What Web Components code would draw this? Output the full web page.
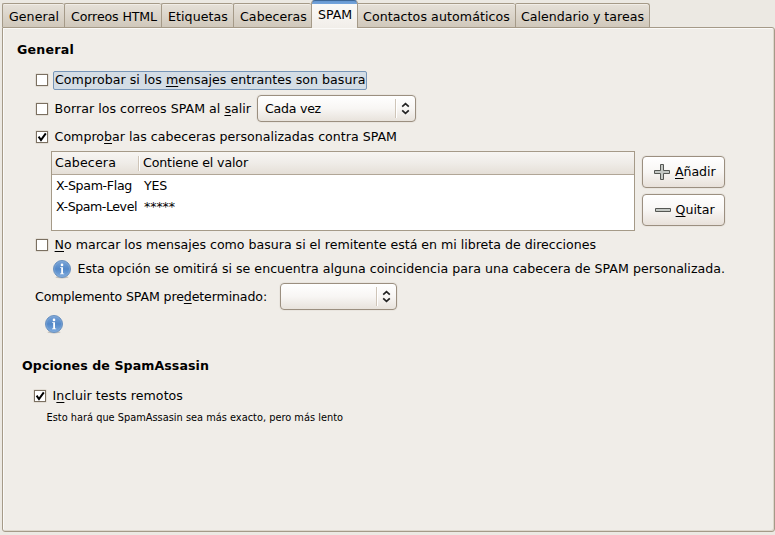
<!DOCTYPE html>
<html lang="es">
<head>
<meta charset="utf-8">
<title>Preferencias de correo</title>
<style>
html,body{margin:0;height:100%;overflow:hidden;background:#ece9e3}
body{font:12.6px/16px "DejaVu Sans",sans-serif;color:#000}
</style>
</head>
<body>
<mail-preferences></mail-preferences>
<script>
const define = (name, html, setup) => {
  const t = document.createElement('template');
  t.innerHTML = html;
  customElements.define(name, class extends HTMLElement {
    constructor() {
      super();
      this.attachShadow({mode: 'open'}).append(t.content.cloneNode(true));
    }
    connectedCallback() { if (setup) setup.call(this, this.shadowRoot); }
  });
};

/* Text run; "w" spreads the letters over a fixed width. */
define('ui-text', `<style>
:host{display:inline-block;white-space:nowrap;flex:none}
:host([bold]){font-weight:bold}
:host([small]){font-size:9.8px}
</style><span><slot></slot></span>`, function (root) {
  const w = +this.getAttribute('w');
  if (!w) return;
  const span = root.querySelector('span');
  const n = this.textContent.length;
  span.style.letterSpacing = ((w - span.getBoundingClientRect().width) / n).toFixed(4) + 'px';
  this.style.width = w + 'px';
});

define('ui-tab', `<style>
:host{display:flex;box-sizing:border-box;width:var(--tab-w);height:24px;padding:5px 0 0 6px;
border:solid #a59a88;border-width:1px 0 0 1px;border-radius:2px 2px 0 0;
background:linear-gradient(#e6e1d9,#d0c8bb);box-shadow:inset 0 1px #f1ede7}
:host([last]){border-right-width:1px;border-radius:2px 3px 0 0;padding-left:5px}
:host([active]){height:28px;padding-top:6px;border:1px solid #a59a88;border-bottom:0;border-top-color:#3d6797;
border-radius:4px 4px 0 0;margin-bottom:-1px;z-index:1;
background:linear-gradient(#6698d2 0,#76a5dc 3px,#fbfaf8 3px,#f1eee9 100%);box-shadow:none}
:host([after]){border-left:0;padding-left:5px;border-top-left-radius:0}
</style><slot></slot>`);

define('ui-check', `<style>
:host{display:block;flex:none;width:12px;height:12px}
svg{display:block;overflow:visible}
path{display:none}
:host([checked]) path{display:block}
</style><svg width="12" height="12"><rect x="-.5" y="-.5" width="13" height="13" rx="1" fill="none" stroke="#e2ddd5"/><rect x=".5" y=".5" width="11" height="11" fill="#fff" stroke="#7b7061"/><path d="M2.6 5.6 L5 9 L9.8 2.4" fill="none" stroke="#000" stroke-width="2"/></svg>`);

define('ui-combo', `<style>
:host{display:flex;flex:none;align-items:center;box-sizing:border-box;height:27px;padding-left:7px;
border:1px solid #9b8f80;border-radius:4px;background:linear-gradient(#fff,#f8f6f4 50%,#e8e3dc);
box-shadow:0 0 0 1px #e9e5df}
i{margin-left:auto;width:1px;height:19px;background:#cfc5b8;box-shadow:1px 0 #fff}
svg{display:block;margin:0 5px 0 5px}
</style><slot></slot><i></i><svg width="9" height="13" fill="none" stroke="#222" stroke-width="1.7"><path d="M1.2 4.6 4.5 1.6 7.8 4.6M1.2 8.4 4.5 11.4 7.8 8.4"/></svg>`);

define('ui-button', `<style>
:host{display:flex;align-items:center;box-sizing:border-box;width:83px;height:32px;padding-left:11px;
border:1px solid #9b8f80;border-radius:4px;background:linear-gradient(#fff,#f8f6f4 50%,#e8e1da);
box-shadow:0 0 0 1px #e9e5df}
svg{display:block;flex:none;margin-right:4px}
.plus,.minus{display:none}
:host([icon=plus]) .plus,:host([icon=minus]) .minus{display:block}
</style><svg width="17" height="16" fill="#c4c8c4" stroke="#555753"><path class="plus" d="M6.5.5H9.5V6.5H15.5V9.5H9.5V15.5H6.5V9.5H.5V6.5H6.5Z"/><path class="minus" d="M1.5 6.5H16.5V9.5H1.5Z"/></svg><slot></slot>`);

define('ui-info', `<style>:host{display:block;flex:none;width:18px;height:18px}svg{display:block;overflow:visible}</style>
<svg width="18" height="18"><defs><linearGradient id="g" x2="0" y2="1"><stop stop-color="#7ba5d8"/><stop offset=".5" stop-color="#5388c8"/><stop offset="1" stop-color="#7facdf"/></linearGradient></defs><ellipse cx="9" cy="17.2" rx="6.5" ry="1.3" fill="#c4c1bb"/><circle cx="9" cy="9" r="8.5" fill="url(#g)" stroke="#6b92c0" stroke-width="1"/><circle cx="9" cy="9" r="7.5" fill="none" stroke="#86acd9" stroke-width=".5"/><circle cx="9" cy="4.9" r="1.3" fill="#fff"/><path d="M7.2 7.3H10V13.4H11.2V14.2H7V13.4H8.2V8.1H7.2Z" fill="#fff"/></svg>`);

define('ui-row', `<style>:host{display:flex;align-items:center}</style><slot></slot>`);

define('header-table', `<style>
:host{display:block;flex:none;box-sizing:border-box;width:584px;height:80px;border:1px solid #a59a88;background:#fff}
.r{display:grid;grid-template-columns:83px 1fr;align-items:center;height:21px;padding-left:4px}
.h{height:22px;padding-left:3px;border-bottom:1px solid #b1a697;background:linear-gradient(#f7f5f2,#efece8 50%,#e5dfd7)}
.h span{display:flex;align-items:center}
.h i{width:1px;height:15px;background:#cfc5b8;box-shadow:1px 0 #fff;margin-right:4px}
.b{margin-left:5px}
</style>
<div class="r h"><ui-text w="61">Cabecera</ui-text><span><i></i><ui-text w="105">Contiene el valor</ui-text></span></div>
<div class="r"><ui-text w="76">X-Spam-Flag</ui-text><ui-text class="b" w="23">YES</ui-text></div>
<div class="r"><ui-text w="81">X-Spam-Level</ui-text><ui-text class="b" w="31">*****</ui-text></div>`);

define('mail-preferences', `<style>
:host{display:flex;flex-direction:column;box-sizing:border-box;height:532px;padding:0 0 0 2px}
nav{display:flex;align-items:flex-end;height:27px}
main{flex:1;box-sizing:border-box;width:773px;padding:10px 0 0;border:1px solid #a59a88;border-radius:0 3px 3px 3px;
background:#f0ede8;box-shadow:inset 1px 1px #fbfaf8,inset -1px -1px #ddd7cc}
u{text-decoration-thickness:1px;text-underline-offset:2px;text-decoration-skip-ink:none}
ui-row{height:28px}
ui-check{margin-right:6px}
ui-check + ui-text{margin-left:.6px}
.focus{display:flex;align-items:center;box-sizing:border-box;width:314px;height:19px;padding-left:1px;margin-left:-1px;
border:1px solid #7796b8;border-radius:2px;background:#d4dde5}
.buttons{display:flex;flex-direction:column;gap:6px;margin-left:7px}
.i{padding-left:33px}
</style>
<nav>
<ui-tab style="--tab-w:62px"><ui-text w="50">General</ui-text></ui-tab>
<ui-tab style="--tab-w:97px"><ui-text w="86">Correos HTML</ui-text></ui-tab>
<ui-tab style="--tab-w:72px"><ui-text w="60">Etiquetas</ui-text></ui-tab>
<ui-tab style="--tab-w:78px"><ui-text w="67">Cabeceras</ui-text></ui-tab>
<ui-tab active style="--tab-w:47px"><ui-text w="34">SPAM</ui-text></ui-tab>
<ui-tab after style="--tab-w:157px"><ui-text w="147">Contactos automáticos</ui-text></ui-tab>
<ui-tab last style="--tab-w:135px"><ui-text w="123">Calendario y tareas</ui-text></ui-tab>
</nav>
<main>
<ui-row style="height:23px;padding-left:14px"><ui-text bold w="57">General</ui-text></ui-row>
<ui-row class="i" style="margin-top:5px"><ui-check></ui-check><span class="focus"><ui-text w="310.5">Comprobar si los <u>m</u>ensajes entrantes son basura</ui-text></span></ui-row>
<ui-row class="i" style="margin-top:1px;height:27px"><ui-check></ui-check><ui-text w="196.4">Borrar los correos SPAM al <u>s</u>alir</ui-text><ui-combo style="width:159px;margin-left:6px"><ui-text w="56">Cada vez</ui-text></ui-combo></ui-row>
<ui-row class="i" style="margin-top:1px"><ui-check checked></ui-check><ui-text w="342.4">Compro<u>b</u>ar las cabeceras personalizadas contra SPAM</ui-text></ui-row>
<ui-row style="height:80px;padding-left:48px"><header-table></header-table><div class="buttons"><ui-button icon="plus"><ui-text w="40.5"><u>A</u>ñadir</ui-text></ui-button><ui-button icon="minus"><ui-text w="39" style="margin-left:.6px"><u>Q</u>uitar</ui-text></ui-button></div></ui-row>
<ui-row class="i"><ui-check></ui-check><ui-text w="541.4"><u>N</u>o marcar los mensajes como basura si el remitente está en mi libreta de direcciones</ui-text></ui-row>
<ui-row style="height:20px;padding-left:50px"><ui-info></ui-info><ui-text w="647.5" style="margin-left:6.5px">Esta opción se omitirá si se encuentra alguna coincidencia para una cabecera de SPAM personalizada.</ui-text></ui-row>
<ui-row style="height:27px;margin-top:4px;padding-left:32px"><ui-text w="232">Complemento SPAM pre<u>d</u>eterminado:</ui-text><ui-combo style="width:117px;margin-left:13px"></ui-combo></ui-row>
<ui-row style="height:22px;margin-top:3px;padding-left:42px"><ui-info></ui-info></ui-row>
<ui-row style="height:22px;margin-top:20px;padding-left:19px"><ui-text bold w="187">Opciones de SpamAssasin</ui-text></ui-row>
<ui-row style="height:20px;margin-top:9px;padding-left:31px"><ui-check checked></ui-check><ui-text w="130.4">I<u>n</u>cluir tests remotos</ui-text></ui-row>
<ui-row style="height:20px;margin-top:2px;padding-left:43.5px"><ui-text small w="296.5">Esto hará que SpamAssasin sea más exacto, pero más lento</ui-text></ui-row>
</main>`);
</script>
</body>
</html>
